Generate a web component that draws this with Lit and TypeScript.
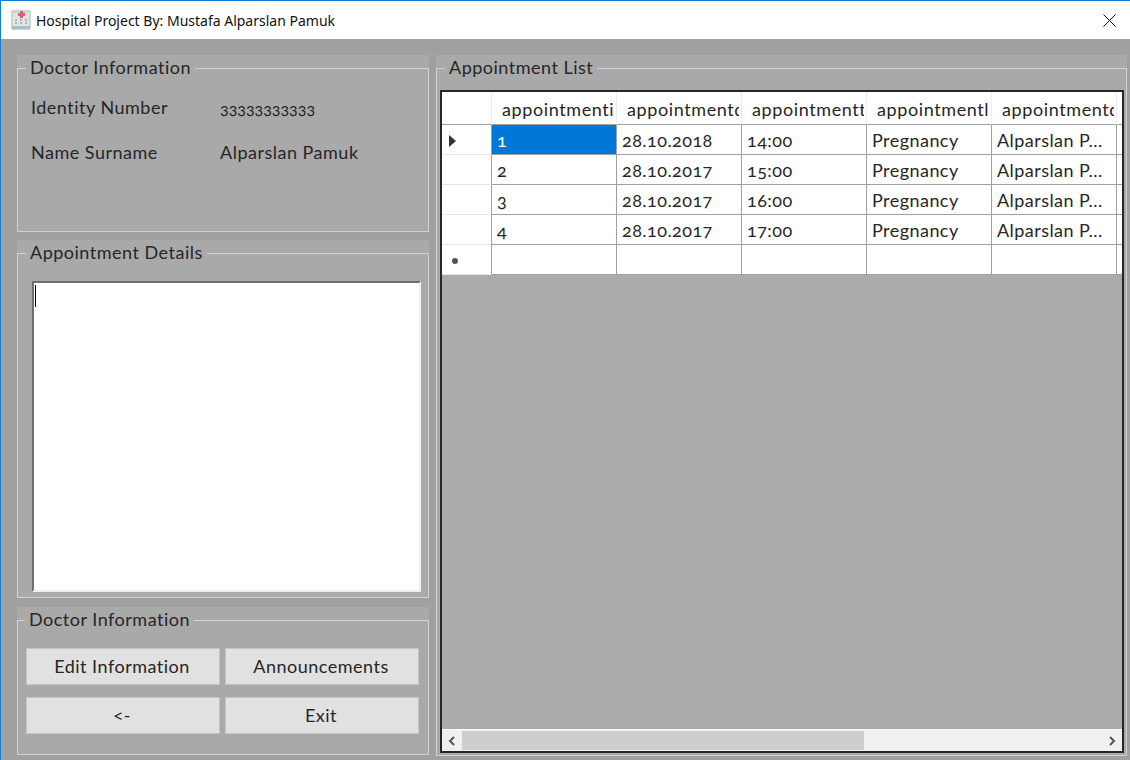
import { LitElement, html, css } from "lit";
import { customElement } from "lit/decorators.js";

const rows = [
  ["1", "28.10.2018", "14:00", "Pregnancy", "Alparslan P..."],
  ["2", "28.10.2017", "15:00", "Pregnancy", "Alparslan P..."],
  ["3", "28.10.2017", "16:00", "Pregnancy", "Alparslan P..."],
  ["4", "28.10.2017", "17:00", "Pregnancy", "Alparslan P..."],
];

const headers = [
  "appointmentid",
  "appointmentdate",
  "appointmenttime",
  "appointmentlabel",
  "appointmentdoctor",
];

@customElement("app-root")
export class AppRoot extends LitElement {
  static styles = css`
    :host {
      display: block;
      width: 1130px;
      height: 760px;
      overflow: hidden;
      font-family: "Lato", "Open Sans", sans-serif;
      font-size: 18px;
      font-feature-settings: "onum";
      color: #262626;
    }
    .window {
      display: flex;
      flex-direction: column;
      height: 100%;
      box-sizing: border-box;
      border-top: 1px solid #0f80d8;
      border-left: 1px solid #0f80d8;
      background: #a0a0a0;
    }
    .titlebar {
      display: flex;
      align-items: center;
      height: 38px;
      flex: none;
      background: #fff;
      padding: 0 14px 0 10px;
      gap: 5px;
    }
    .titlebar .caption {
      flex: 1;
      font-family: "Noto Sans", sans-serif;
      font-size: 14px;
      font-feature-settings: normal;
      color: #111;
    }
    .content {
      flex: 1;
      display: grid;
      grid-template-columns: 412px 691px;
      column-gap: 7px;
      padding: 16px 0 4px 16px;
      min-height: 0;
    }
    .left {
      display: grid;
      grid-template-rows: 177px 359px 148px;
      row-gap: 8px;
      min-height: 0;
    }
    .group {
      background: #a9a9a9;
      display: flex;
      min-height: 0;
    }
    .group.details {
      margin-bottom: 1px;
    }
    fieldset {
      flex: 1;
      margin: 0;
      min-width: 0;
      padding: 0;
      border: 1px solid #d2d2d2;
      box-sizing: border-box;
      display: flex;
      flex-direction: column;
    }
    legend {
      margin-left: 8px;
      padding: 0 4px;
      height: 26px;
      line-height: 24px;
      font-size: 18px;
      letter-spacing: 0.5px;
    }
    .actions legend {
      margin-left: 7px;
    }
    .list legend {
      margin-left: 5px;
    }
    .info {
      display: grid;
      grid-template-columns: 189px 1fr;
      grid-auto-rows: 45px;
      padding: 10px 0 0 13px;
      letter-spacing: 0.5px;
    }
    .info .label,
    .info .value {
      line-height: 32px;
    }
    .info .number {
      font-size: 16px;
      line-height: 34px;
      letter-spacing: 0;
      color: #1e1e1e;
    }
    .textarea {
      margin: 15px 7px 5px 14px;
      flex: 1;
      background: #fff;
      border: 2px solid;
      border-color: #6e6e6e #f0f0f0 #f0f0f0 #6e6e6e;
      padding: 2px 1px;
    }
    .caret {
      width: 1px;
      height: 22px;
      background: #000;
    }
    .buttons {
      display: grid;
      grid-template-columns: 194px 194px;
      grid-auto-rows: 37px;
      column-gap: 5px;
      row-gap: 12px;
      padding: 15px 0 0 8px;
    }
    button {
      font: inherit;
      font-feature-settings: normal;
      color: inherit;
      background: #e1e1e1;
      border: 1px solid #c4c4c4;
      padding: 0 2px 2px 0;
      letter-spacing: 0.5px;
    }
    .list fieldset {
      padding: 9px 2px 2px 3px;
    }
    .grid {
      flex: 1;
      display: flex;
      flex-direction: column;
      min-height: 0;
      border: 2px solid #262626;
      background: #ababab;
    }
    .cells {
      flex: 1;
      min-height: 0;
      overflow: hidden;
      display: grid;
      grid-template-columns: 50px repeat(5, 125px) 60px;
      grid-template-rows: 33px;
      grid-auto-rows: 30px;
      align-content: start;
    }
    .cell {
      background: #fff;
      border-right: 1px solid #a0a0a0;
      border-bottom: 1px solid #a0a0a0;
      box-sizing: border-box;
      padding-left: 5px;
      line-height: 31px;
      white-space: nowrap;
      overflow: hidden;
      letter-spacing: 0.45px;
    }
    .cell.selected {
      background: #0078d7;
      color: #fff;
    }
    .head {
      line-height: 34px;
      padding-left: 10px;
      padding-right: 2px;
      border-right-color: #ececec;
      letter-spacing: 0.6px;
    }
    .head span {
      display: block;
      overflow: hidden;
    }
    .corner {
      padding: 0;
    }
    .rowhead {
      padding: 2px 0 0;
      display: flex;
      align-items: center;
      border-bottom-color: #e6e6e6;
    }
    .rowhead svg {
      margin-left: 7px;
    }
    .scrollbar {
      flex: none;
      height: 21px;
      display: flex;
      align-items: center;
      background: #f0f0f0;
      border-top: 1px solid #fafafa;
    }
    .arrow {
      width: 20px;
      display: flex;
      justify-content: center;
      flex: none;
    }
    .track {
      flex: 1;
      height: 19px;
    }
    .thumb {
      width: 402px;
      height: 100%;
      background: #cdcdcd;
    }
  `;

  private _rowHead(kind: "current" | "new" | "") {
    let icon = html``;
    if (kind === "current") {
      icon = html`<svg width="8" height="14" viewBox="0 0 8 14">
        <path d="M0 1 L7 7 L0 13 Z" fill="#333" />
      </svg>`;
    }
    if (kind === "new") {
      icon = html`<svg width="9" height="9" viewBox="0 0 9 9">
        <circle cx="6" cy="5" r="3" fill="#555" />
      </svg>`;
    }
    return html`<div class="cell rowhead">${icon}</div>`;
  }

  render() {
    return html`
      <div class="window">
        <div class="titlebar">
          <svg width="20" height="20" viewBox="0 0 20 20">
            <rect x="0" y="0" width="20" height="20" rx="2" fill="#ced3d6" />
            <rect x="2" y="3" width="16" height="13" fill="#e2e5e7" />
            <rect x="9" y="1" width="3" height="7" fill="#ea5a70" />
            <rect x="7" y="3" width="7" height="3" fill="#ea5a70" />
            <path
              d="M4 10h2M9 10h2M14 10h2M4 13h2M9 13h2M14 13h2"
              stroke="#97a3ac"
              stroke-width="1.5"
            />
            <rect x="1" y="16" width="18" height="3" fill="#a5c2ca" />
          </svg>
          <span class="caption">Hospital Project By: Mustafa Alparslan Pamuk</span>
          <svg width="13" height="13" viewBox="0 0 13 13">
            <path d="M0.5 0.5 L12.5 12.5 M12.5 0.5 L0.5 12.5" stroke="#111" fill="none" />
          </svg>
        </div>
        <div class="content">
          <div class="left">
            <div class="group">
              <fieldset>
                <legend>Doctor Information</legend>
                <div class="info">
                  <div class="label">Identity Number</div>
                  <div class="number">33333333333</div>
                  <div class="label">Name Surname</div>
                  <div class="value">Alparslan Pamuk</div>
                </div>
              </fieldset>
            </div>
            <div class="group details">
              <fieldset>
                <legend>Appointment Details</legend>
                <div class="textarea"><div class="caret"></div></div>
              </fieldset>
            </div>
            <div class="group actions">
              <fieldset>
                <legend>Doctor Information</legend>
                <div class="buttons">
                  <button>Edit Information</button>
                  <button>Announcements</button>
                  <button>&lt;-</button>
                  <button>Exit</button>
                </div>
              </fieldset>
            </div>
          </div>
          <div class="group list">
            <fieldset>
              <legend>Appointment List</legend>
              <div class="grid">
                <div class="cells">
                  <div class="cell head corner"></div>
                  ${headers.map((h) => html`<div class="cell head"><span>${h}</span></div>`)}
                  <div class="cell head"></div>
                  ${rows.map(
                    (row, r) => html`
                      ${this._rowHead(r === 0 ? "current" : "")}
                      ${row.map(
                        (v, c) =>
                          html`<div class="cell ${r === 0 && c === 0 ? "selected" : ""}">${v}</div>`
                      )}
                      <div class="cell"></div>
                    `
                  )}
                  ${this._rowHead("new")}
                  ${[0, 1, 2, 3, 4, 5].map(() => html`<div class="cell"></div>`)}
                </div>
                <div class="scrollbar">
                  <div class="arrow">
                    <svg width="10" height="10" viewBox="0 0 10 10">
                      <path d="M7 1 L3 5 L7 9" fill="none" stroke="#555" stroke-width="2" />
                    </svg>
                  </div>
                  <div class="track"><div class="thumb"></div></div>
                  <div class="arrow">
                    <svg width="10" height="10" viewBox="0 0 10 10">
                      <path d="M3 1 L7 5 L3 9" fill="none" stroke="#555" stroke-width="2" />
                    </svg>
                  </div>
                </div>
              </div>
            </fieldset>
          </div>
        </div>
      </div>
    `;
  }
}
